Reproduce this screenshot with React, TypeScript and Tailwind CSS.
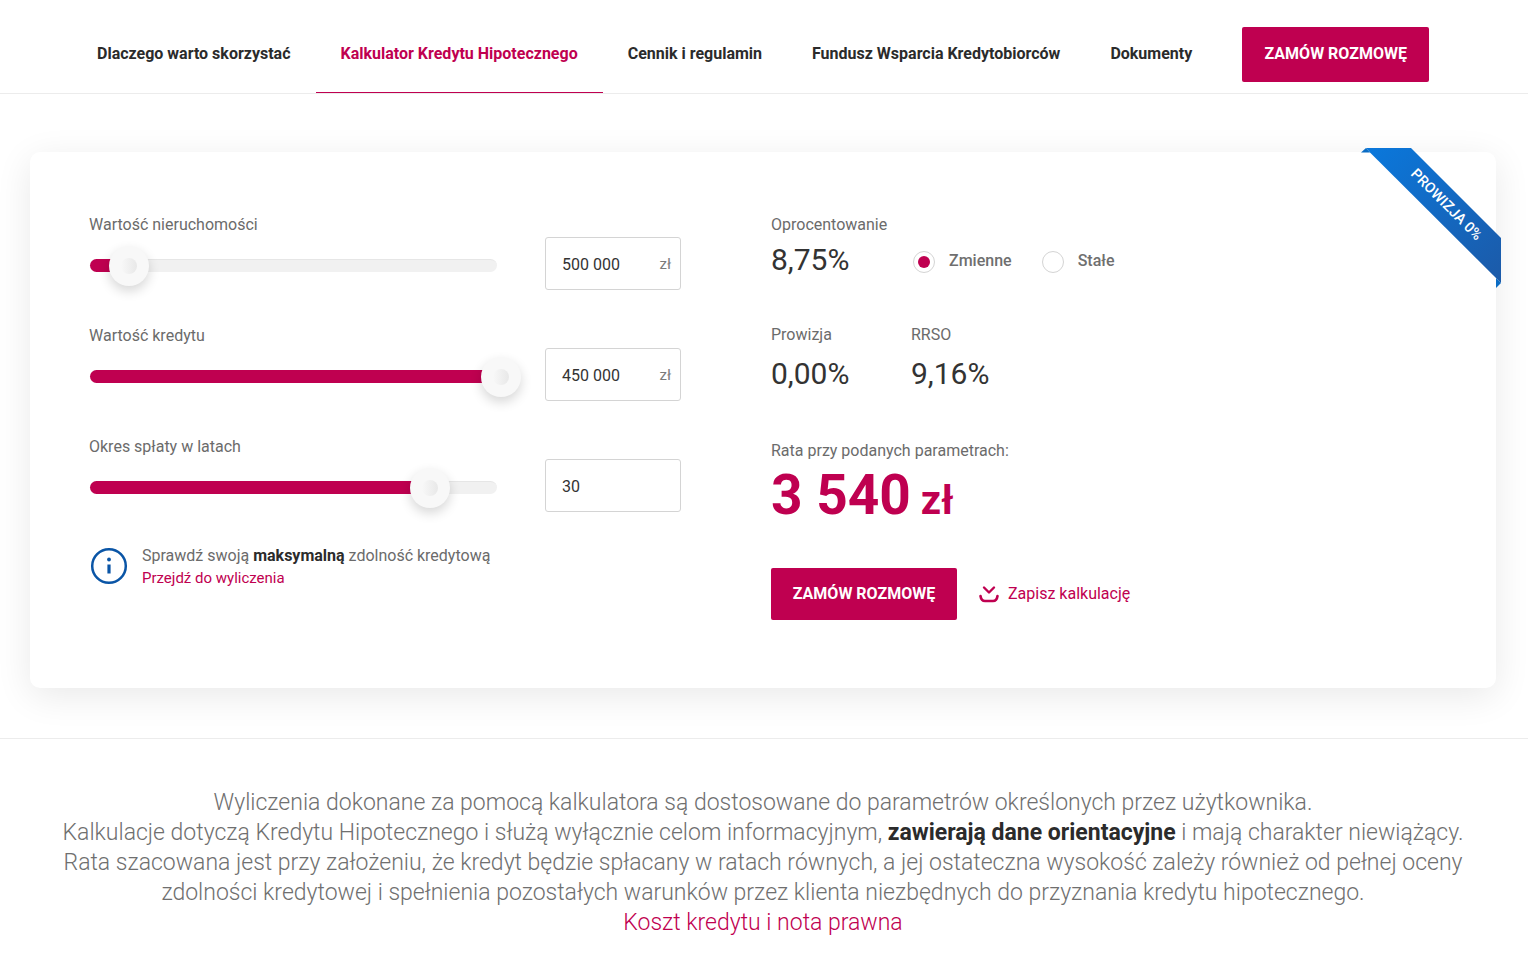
const navItems = [
  { label: 'Dlaczego warto skorzystać' },
  { label: 'Kalkulator Kredytu Hipotecznego', active: true },
  { label: 'Cennik i regulamin' },
  { label: 'Fundusz Wsparcia Kredytobiorców' },
  { label: 'Dokumenty' },
];

const sliders = [
  { label: 'Wartość nieruchomości', value: '500 000', unit: 'zł', pos: 39 },
  { label: 'Wartość kredytu', value: '450 000', unit: 'zł', pos: 411 },
  { label: 'Okres spłaty w latach', value: '30', unit: '', pos: 340 },
];

function Slider({ label, value, unit, pos }: { label: string; value: string; unit: string; pos: number }) {
  return (
    <div>
      <div className="h-6 text-[16px] leading-6 text-[#6b6b6b]">{label}</div>
      <div className="flex items-center">
        <div className="relative w-[407px] h-[13px] ml-px mt-1 rounded-full bg-[#f1f1f1] border-t border-[#e6e6e6]">
          <div className="absolute left-0 -top-px h-[13px] rounded-full bg-[#bf0050]" style={{ width: pos }} />
          <div
            className="absolute top-[-14px] -ml-5 w-10 h-10 rounded-full bg-[#f8f8f8] shadow-[0_5px_12px_rgba(0,0,0,0.16)] flex items-center justify-center"
            style={{ left: pos }}
          >
            <div className="w-4 h-4 rounded-full bg-gradient-to-r from-[#f8f8f8] to-[#e8e8e8]" />
          </div>
        </div>
        <div className="ml-[48px] w-[136px] h-[53px] pt-[2px] rounded-[3px] border border-[#d4d4d4] bg-white flex items-center justify-between pl-4 pr-[9px] text-[16px] text-[#333333]">
          <span>{value}</span>
          {unit && <span className="text-[15px] text-[#7a7a7a]">{unit}</span>}
        </div>
      </div>
    </div>
  );
}

function Radio({ label, checked }: { label: string; checked?: boolean }) {
  return (
    <div className="flex items-center gap-[14px]">
      <div className="w-[22px] h-[22px] mt-[2px] rounded-full border border-[#d4d4d4] flex items-center justify-center">
        {checked && <div className="w-3 h-3 rounded-full bg-[#bf0050]" />}
      </div>
      <span className="text-[16px] font-medium text-[#6f6f6f]">{label}</span>
    </div>
  );
}

function Ribbon() {
  return (
    <div className="absolute -top-1 right-[-5px] w-[140px] h-[140px] overflow-hidden">
      <svg width="140" height="140" viewBox="0 0 140 140" className="absolute inset-0">
        <defs>
          <linearGradient id="ribbon" x1="0" y1="0" x2="1" y2="1">
            <stop offset="0" stopColor="#0a78dc" />
            <stop offset="1" stopColor="#1c5aa8" />
          </linearGradient>
        </defs>
        <polygon points="5,0 50,0 140,90 140,135 9,4.5" fill="url(#ribbon)" />
        <polygon points="0,4.5 5,0 9,4.5" fill="#0a6cc4" />
        <polygon points="135,130 135,140 140,135" fill="#0a6cc4" />
      </svg>
      <span className="absolute left-[27px] top-[49px] w-[116px] text-center rotate-45 text-[14.5px] leading-4 font-medium text-white whitespace-nowrap">
        PROWIZJA 0%
      </span>
    </div>
  );
}

export default function App() {
  return (
    <div className="min-h-screen bg-white font-['Roboto',sans-serif] text-[#333333]">
      {/* Nav */}
      <div className="h-[94px] border-b border-[#ececec] flex items-stretch pl-[72px]">
        {navItems.map((item) => (
          <div
            key={item.label}
            className={`relative h-[93px] pt-[14px] px-[25px] flex items-center text-[16px] font-bold ${
              item.active ? 'text-[#bf0050]' : 'text-[#2b2b2b]'
            }`}
          >
            {item.label}
            {item.active && <div className="absolute left-0 right-0 bottom-0 h-px bg-[#bf0050]" />}
          </div>
        ))}
        <div className="ml-[25px] mt-[27px] w-[187px] h-[55px] pb-[2px] rounded-[2px] bg-[#bf0050] text-white text-[16px] font-bold flex items-center justify-center">
          ZAMÓW ROZMOWĘ
        </div>
      </div>

      {/* Calculator */}
      <div className="pl-[30px] pr-[32px] pt-[58px] pb-[50px]">
        <div className="relative h-[536px] rounded-[10px] bg-white shadow-[0_8px_36px_rgba(0,0,0,0.09)] flex pl-[59px] pt-[61px]">
          <Ribbon />
          <div className="w-[592px] flex flex-col gap-[34px]">
            {sliders.map((s) => (
              <Slider key={s.label} {...s} />
            ))}
            <div className="flex items-center ml-px -mt-px">
              <svg width="38" height="38" viewBox="0 0 38 38" fill="none" className="mb-[2px]">
                <circle cx="19" cy="19" r="16.8" stroke="#0a55a6" strokeWidth="2.5" />
                <circle cx="19" cy="12.5" r="1.9" fill="#0a55a6" />
                <path d="M19 17.5 V26.5" stroke="#0a55a6" strokeWidth="3.2" />
              </svg>
              <div className="ml-[14px] text-[16px] leading-[22px] text-[#6b6b6b]">
                <div>
                  Sprawdź swoją <b className="font-bold text-[#2b2b2b]">maksymalną</b> zdolność kredytową
                </div>
                <div className="text-[15px] text-[#bf0050]">Przejdź do wyliczenia</div>
              </div>
            </div>
          </div>

          <div className="ml-[90px]">
            <div className="text-[16px] leading-6 text-[#6b6b6b]">Oprocentowanie</div>
            <div className="flex items-center h-[48px]">
              <div className="w-[142px] mb-[2px] text-[30px] leading-[48px] text-[#333333]">8,75%</div>
              <Radio label="Zmienne" checked />
              <div className="ml-[30px]">
                <Radio label="Stałe" />
              </div>
            </div>

            <div className="flex mt-[38px]">
              <div className="w-[140px]">
                <div className="text-[16px] leading-6 text-[#6b6b6b]">Prowizja</div>
                <div className="text-[30px] leading-[48px] mt-[3px]">0,00%</div>
              </div>
              <div>
                <div className="text-[16px] leading-6 text-[#6b6b6b]">RRSO</div>
                <div className="text-[30px] leading-[48px] mt-[3px]">9,16%</div>
              </div>
            </div>

            <div className="text-[16px] leading-6 text-[#6b6b6b] mt-[41px]">Rata przy podanych parametrach:</div>
            <div className="h-[66px] font-bold text-[#bf0050] text-[55px] leading-[64px] whitespace-nowrap">
              3 540<span className="text-[40px]"> zł</span>
            </div>

            <div className="flex items-center mt-[39px]">
              <div className="w-[186px] h-[52px] rounded-[2px] bg-[#bf0050] text-white text-[16px] font-bold flex items-center justify-center">
                ZAMÓW ROZMOWĘ
              </div>
              <svg width="20" height="18" viewBox="0 0 20 18" fill="none" className="ml-[22px]" stroke="#bf0050" strokeLinecap="round" strokeLinejoin="round">
                <path d="M5 2.5 L10 7.5 L15 2.5" strokeWidth="2.4" />
                <path d="M1.5 11 C2 14.5 4 16 6 16 L14 16 C16 16 18 14.5 18.5 11" strokeWidth="2.6" />
              </svg>
              <span className="ml-[9px] text-[16px] text-[#bf0050]">Zapisz kalkulację</span>
            </div>
          </div>
        </div>
      </div>

      {/* Disclaimer */}
      <div className="border-t border-[#ececec] pt-[49px] pb-[34px] pr-[2px] text-center text-[23px] leading-[30px] font-light text-[#6f6f6f]">
        Wyliczenia dokonane za pomocą kalkulatora są dostosowane do parametrów określonych przez użytkownika.
        <br />
        Kalkulacje dotyczą Kredytu Hipotecznego i służą wyłącznie celom informacyjnym,{' '}
        <b className="font-bold text-[#2b2b2b]">zawierają dane orientacyjne</b> i mają charakter niewiążący.
        <br />
        Rata szacowana jest przy założeniu, że kredyt będzie spłacany w ratach równych, a jej ostateczna wysokość zależy również od pełnej oceny
        <br />
        zdolności kredytowej i spełnienia pozostałych warunków przez klienta niezbędnych do przyznania kredytu hipotecznego.
        <br />
        <span className="text-[#bf0050]">Koszt kredytu i nota prawna</span>
      </div>
    </div>
  );
}
